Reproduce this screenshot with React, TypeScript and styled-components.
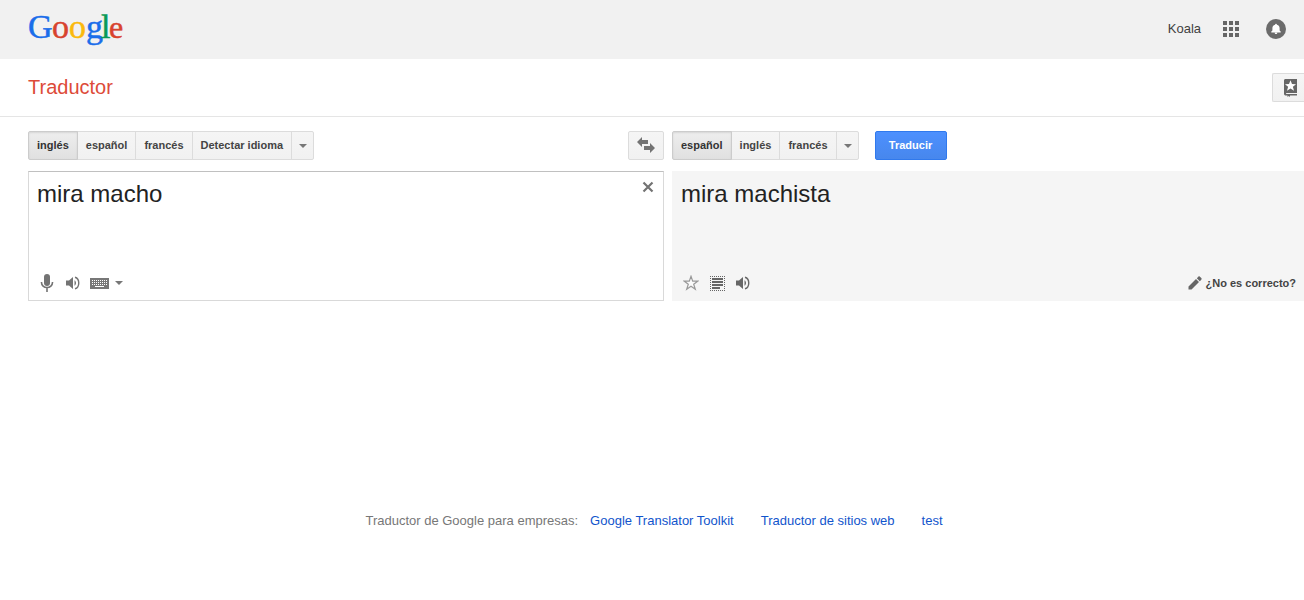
import React from "react";
import styled, { createGlobalStyle, css } from "styled-components";

const GlobalStyle = createGlobalStyle`
  * { box-sizing: border-box; }
  body {
    margin: 0;
    background: #fff;
    color: #222;
    font: 13px/16px "Liberation Sans", Arial, sans-serif;
  }
  button, textarea { font-family: inherit; margin: 0; }
  svg { display: block; }
`;

const Header = styled.header`
  display: flex;
  align-items: center;
  justify-content: space-between;
  height: 59px;
  padding: 0 18px 2px 28px;
  background: #f1f1f1;
`;

const LogoLink = styled.a`
  display: block;
  text-decoration: none;
`;

const LogoLetter = styled.text<{ $size: number }>`
  font-family: "Liberation Serif", "Times New Roman", serif;
  font-size: ${(p) => p.$size}px;
  fill: currentColor;
  stroke: currentColor;
  stroke-width: 0.5px;
`;

const UserNav = styled.nav`
  display: flex;
  align-items: center;
`;

const UserLink = styled.a`
  color: #404040;
  text-decoration: none;
  margin-right: 20px;
`;

const IconButton = styled.button<{ $color?: string }>`
  display: flex;
  align-items: center;
  justify-content: center;
  padding: 0;
  border: 0;
  background: none;
  color: ${(p) => p.$color ?? "#737373"};
  cursor: pointer;
`;

const Apps = styled(IconButton)`
  width: 20px;
  height: 20px;
  margin-right: 25px;
`;

const TitleBar = styled.div`
  display: flex;
  align-items: center;
  justify-content: space-between;
  height: 58px;
  padding-left: 28px;
  border-bottom: 1px solid #e5e5e5;
`;

const Title = styled.h1`
  margin: 0;
  padding-bottom: 2px;
  color: #dd4b39;
  font-size: 20px;
  font-weight: normal;
  line-height: 24px;
`;

const face = css`
  height: 29px;
  border: 1px solid #dcdcdc;
  background: linear-gradient(#f5f5f5, #f1f1f1);
  color: #444;
  font-size: 11px;
  font-weight: bold;
  cursor: pointer;
`;

const Phrasebook = styled.button`
  ${face}
  width: 32px;
  padding: 0 0 0 11px;
  border-right: 0;
  border-radius: 2px 0 0 2px;
  color: #666;
`;

const Main = styled.main`
  display: grid;
  grid-template-columns: 636fr 632fr;
  column-gap: 8px;
  row-gap: 11px;
  padding: 14px 0 0 28px;
`;

const Toolbar = styled.div`
  display: flex;
  align-items: center;
`;

const Segments = styled.div`
  display: flex;
`;

const Segment = styled.button<{ $active?: boolean }>`
  ${face}
  position: relative;
  padding: 0 8px 2px;
  & + & { margin-left: -1px; }
  &:first-child { border-radius: 2px 0 0 2px; }
  &:last-child { border-radius: 0 2px 2px 0; }
  ${(p) =>
    p.$active &&
    css`
      z-index: 1;
      border-color: #ccc;
      background: linear-gradient(#eee, #e0e0e0);
      box-shadow: inset 0 1px 2px rgba(0, 0, 0, 0.1);
      color: #333;
    `}
`;

const Caret = styled.span`
  display: block;
  width: 8px;
  border: solid transparent;
  border-width: 4px 4px 0;
  border-top-color: #777;
`;

const CaretSegment = styled(Segment)`
  width: 23px;
  padding: 0 7px;
`;

const Swap = styled.button`
  ${face}
  width: 36px;
  margin-left: auto;
  padding: 0 8px 2px;
  border-radius: 2px;
  color: #737373;
`;

const Translate = styled.button`
  ${face}
  width: 72px;
  margin-left: 16px;
  padding: 0 0 2px;
  border-color: #3079ed;
  border-radius: 2px;
  background: linear-gradient(#4d90fe, #4787ed);
  color: #fff;
`;

const Source = styled.section`
  position: relative;
  display: flex;
  flex-direction: column;
  height: 130px;
  border: 1px solid #d9d9d9;
  border-top-color: #c0c0c0;
`;

const SourceText = styled.textarea`
  flex: 1;
  min-height: 0;
  padding: 7px 40px 0 8px;
  border: 0;
  outline: 0;
  resize: none;
  background: none;
  color: #222;
  font-size: 24px;
  line-height: 30px;
`;

const Clear = styled(IconButton)`
  position: absolute;
  top: 8px;
  right: 8px;
  width: 14px;
  height: 14px;
`;

const Result = styled.section`
  display: flex;
  flex-direction: column;
  height: 130px;
  border: 1px solid #f5f5f5;
  border-right: 0;
  background: #f5f5f5;
`;

const ResultText = styled.output`
  flex: 1;
  padding: 7px 8px 0;
  font-size: 24px;
  line-height: 30px;
`;

const Tools = styled.div`
  display: flex;
  align-items: center;
  gap: 8px;
  height: 34px;
  padding: 0 8px 0 9px;
`;

const Tool = styled(IconButton)`
  gap: 6px;
  min-width: 18px;
  height: 18px;
`;

const Suggest = styled(IconButton)`
  gap: 4px;
  margin-left: auto;
  color: #444;
  font-size: 11px;
  font-weight: bold;
  line-height: 16px;
`;

const Footer = styled.footer`
  display: flex;
  justify-content: center;
  gap: 27px;
  padding: 212px 0 72px 4px;
  color: #777;
`;

const Business = styled.div`
  display: flex;
  gap: 12px;
`;

const FooterLink = styled.a`
  color: #15c;
  text-decoration: none;
`;

const letters = [
  { ch: "G", x: 0, size: 34, color: "#1a6dea" },
  { ch: "o", x: 24, size: 34, color: "#d8432e" },
  { ch: "o", x: 41, size: 34, color: "#fbb90d" },
  { ch: "g", x: 58, size: 34, color: "#1a6dea" },
  { ch: "l", x: 73, size: 34, color: "#0a9a57" },
  { ch: "e", x: 81, size: 32, color: "#d8432e" },
];

const Logo = () => (
  <svg width="98" height="44" viewBox="0 0 98 44" role="img" aria-label="Google">
    {letters.map((l) => (
      <LogoLetter key={l.x} x={l.x} y="31" $size={l.size} color={l.color}>
        {l.ch}
      </LogoLetter>
    ))}
  </svg>
);

const AppsIcon = () => (
  <svg width="16" height="16" fill="#666">
    {[0, 6, 12].map((y) =>
      [0, 6, 12].map((x) => <rect key={`${x}-${y}`} x={x} y={y} width="4" height="4" />)
    )}
  </svg>
);

const BellIcon = () => (
  <svg width="20" height="20">
    <circle cx="10" cy="10" r="10" fill="#6b6b6b" />
    <path
      fill="#fff"
      d="M10 4.800c.6 0 .9.4.9.9 1.900.4 2.700 1.700 2.700 3.400v2.300l1.100 1.200v.8H5.300v-.8l1.100-1.200V9.100c0-1.700.8-3 2.700-3.400 0-.5.3-.9.9-.9zM8.700 13.800h2.600c0 .8-.5 1.300-1.300 1.300s-1.300-.5-1.300-1.300z"
    />
  </svg>
);

const BookIcon = () => (
  <svg width="14" height="18" fill="currentColor">
    <path d="M1.500 0H13v14H2.500c-.8 0-.8 1 0 1H13v1.500H6V18l-1.300-1-1.200 1v-1.500H2C.7 16.500 0 15.800 0 14.700V1.500C0 .6.6 0 1.500 0z" />
    <path
      fill="#fff"
      d="M6.500 1.200l1.500 3.800 4 .2-3.100 2.600 1.100 4-3.500-2.200-3.500 2.200 1.100-4L1 5.200 5 5z"
    />
  </svg>
);

const SwapIcon = () => (
  <svg width="18" height="16" fill="currentColor">
    <path d="M0 5l5-5v3h6v4H5v3z" />
    <path d="M18 11l-5-5v3H7v4h6v3z" />
  </svg>
);

const ClearIcon = () => (
  <svg width="12" height="12" fill="none" stroke="#737373" strokeWidth="2.200">
    <path d="M1.500 1.500l9 9M10.500 1.500l-9 9" />
  </svg>
);

const MicIcon = () => (
  <svg width="14" height="18" fill="currentColor">
    <rect x="4" y="0" width="6" height="12" rx="3" />
    <path d="M1.500 8v.5a5.500 5 0 0 0 11 0V8M7 13.500V18" fill="none" stroke="currentColor" strokeWidth="1.600" />
  </svg>
);

const SpeakerIcon = () => (
  <svg width="14" height="14" fill="currentColor">
    <path d="M0 4.500h3L7 1v12L3 9.500H0z" />
    <path d="M8.500 4.300c2 1 2 4.400 0 5.400z" />
    <path d="M9 1.200c5 1.300 5 10.300 0 11.600" fill="none" stroke="currentColor" strokeWidth="1.400" />
  </svg>
);

const KeyboardIcon = () => (
  <svg width="19" height="11">
    <rect width="19" height="11" fill="#777" />
    {[2, 4, 6].map((y) =>
      [2, 4, 6, 8, 10, 12, 14, 16].map((x) => (
        <rect key={`${x}-${y}`} x={x} y={y} width="1" height="1" fill="#fff" />
      ))
    )}
    <rect x="5" y="8" width="9" height="1" fill="#fff" />
  </svg>
);

const StarIcon = () => (
  <svg width="16" height="16" fill="#fafafa" stroke="#999" strokeWidth="1.200">
    <path d="M8 1.300l1.700 4.800h5.200l-4.200 3.100 1.600 5.100L8 11.300l-4.300 3 1.600-5.100-4.200-3.100h5.200z" />
  </svg>
);

const SelectIcon = () => (
  <svg width="15" height="15" fill="#666">
    <path
      d="M0 .5h15M0 14.500h15M.5 0v15M14.500 0v15"
      fill="none"
      stroke="#666"
      strokeDasharray="1 1"
    />
    <rect x="2" y="2" width="11" height="2" />
    <rect x="2" y="5" width="11" height="2" />
    <rect x="2" y="8" width="11" height="2" />
    <rect x="2" y="11" width="8" height="2" />
  </svg>
);

const PencilIcon = () => (
  <svg width="14" height="14" fill="#666">
    <path d="M0.500 13.500v-3l7.500-7.500 3 3-7.500 7.500zM8.800 2.200L10.300.7c.5-.5 1.100-.5 1.600 0l1.400 1.400c.5.5.5 1.100 0 1.600l-1.500 1.500z" />
  </svg>
);

type LanguageBarProps = { label: string; languages: string[] };

const LanguageBar = ({ label, languages }: LanguageBarProps) => (
  <Segments role="group" aria-label={label}>
    {languages.map((name, i) => (
      <Segment key={name} $active={i === 0} aria-pressed={i === 0}>
        {name}
      </Segment>
    ))}
    <CaretSegment aria-label="Más idiomas">
      <Caret />
    </CaretSegment>
  </Segments>
);

export default function App() {
  return (
    <>
      <GlobalStyle />
      <Header>
        <LogoLink href="#">
          <Logo />
        </LogoLink>
        <UserNav>
          <UserLink href="#">Koala</UserLink>
          <Apps aria-label="Aplicaciones">
            <AppsIcon />
          </Apps>
          <IconButton aria-label="Notificaciones">
            <BellIcon />
          </IconButton>
        </UserNav>
      </Header>
      <TitleBar>
        <Title>Traductor</Title>
        <Phrasebook aria-label="Libro de frases">
          <BookIcon />
        </Phrasebook>
      </TitleBar>
      <Main>
        <Toolbar>
          <LanguageBar label="Idioma de origen" languages={["inglés", "español", "francés", "Detectar idioma"]} />
          <Swap aria-label="Intercambiar idiomas">
            <SwapIcon />
          </Swap>
        </Toolbar>
        <Toolbar>
          <LanguageBar label="Idioma de destino" languages={["español", "inglés", "francés"]} />
          <Translate>Traducir</Translate>
        </Toolbar>
        <Source>
          <SourceText aria-label="Texto original" defaultValue="mira macho" spellCheck={false} />
          <Clear aria-label="Borrar texto">
            <ClearIcon />
          </Clear>
          <Tools>
            <Tool aria-label="Dictar">
              <MicIcon />
            </Tool>
            <Tool aria-label="Escuchar">
              <SpeakerIcon />
            </Tool>
            <Tool aria-label="Teclado">
              <KeyboardIcon />
              <Caret />
            </Tool>
          </Tools>
        </Source>
        <Result>
          <ResultText>mira machista</ResultText>
          <Tools>
            <Tool aria-label="Guardar">
              <StarIcon />
            </Tool>
            <Tool aria-label="Seleccionar todo">
              <SelectIcon />
            </Tool>
            <Tool aria-label="Escuchar traducción" $color="#666">
              <SpeakerIcon />
            </Tool>
            <Suggest>
              <PencilIcon />
              ¿No es correcto?
            </Suggest>
          </Tools>
        </Result>
      </Main>
      <Footer>
        <Business>
          Traductor de Google para empresas:
          <FooterLink href="#">Google Translator Toolkit</FooterLink>
        </Business>
        <FooterLink href="#">Traductor de sitios web</FooterLink>
        <FooterLink href="#">test</FooterLink>
      </Footer>
    </>
  );
}
